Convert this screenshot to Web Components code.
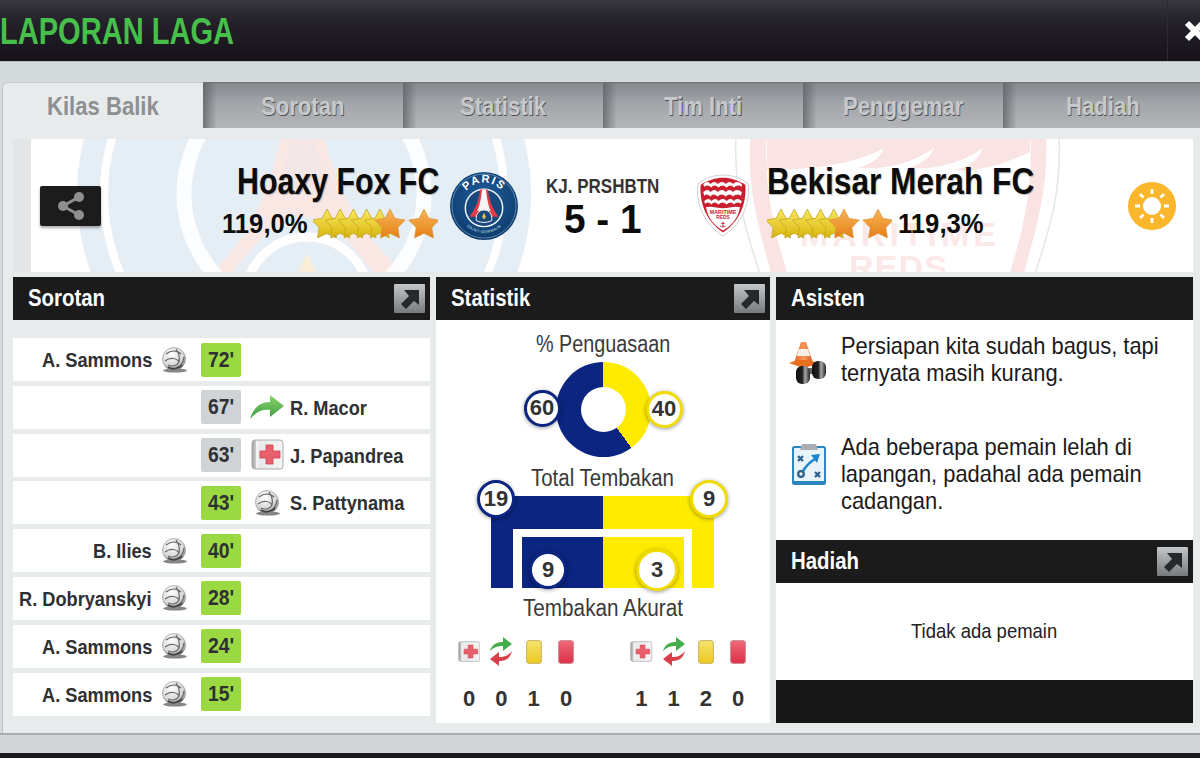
<!DOCTYPE html>
<html lang="id">
<head>
<meta charset="utf-8">
<title>Laporan Laga</title>
<style>
    html, body { margin: 0; width: 1200px; height: 758px; overflow: hidden; background: #d5dadc; }
    body { font-family: "Liberation Sans", Arial, sans-serif; }
</style>
</head>
<body>
<match-report></match-report>

<script>
const SANS = `"Liberation Sans", Arial, sans-serif`;
const SANS_ATTR = `'Liberation Sans', Arial, sans-serif`;

const ICONS = {
    ball: `<svg viewBox="0 0 26 28" width="26" height="28">
        <defs><radialGradient id="b" cx=".4" cy=".3" r=".8"><stop offset="0" stop-color="#fff"/><stop offset=".6" stop-color="#d8d8d8"/><stop offset="1" stop-color="#6d6d6d"/></radialGradient></defs>
        <ellipse cx="14" cy="24.5" rx="12" ry="2" fill="#333" opacity=".6"/>
        <circle cx="13" cy="13" r="11.5" fill="url(#b)" stroke="#8a8a8a" stroke-width=".6"/>
        <path d="M5 8c5-4 11-4 15 0M4 15c5-4 12-3 14 1-2 4-7 5-11 3M15 3c3 4 4 8 3 13M20 19c2-3 3-6 3-8" fill="none" stroke="#666" stroke-width="1.2"/>
        <path d="M7 21c4 3 10 2 14-2" fill="none" stroke="#444" stroke-width="2"/>
    </svg>`,
    arrow: `<svg viewBox="0 0 34 26" width="34" height="26">
        <defs><linearGradient id="a" x1="0" y1="0" x2="0" y2="1"><stop offset="0" stop-color="#8bd667"/><stop offset="1" stop-color="#3d9c46"/></linearGradient></defs>
        <path d="M0 25C3 14 10 8 20 8V1l14 11-14 11v-7C12 15 6 18 0 25Z" fill="url(#a)"/>
    </svg>`,
    medkit: `<svg viewBox="0 0 33 32" width="33" height="32">
        <defs><linearGradient id="m" x1="0" y1="0" x2="1" y2="0"><stop offset="0" stop-color="#9a9da0"/><stop offset=".2" stop-color="#e8e9ea"/><stop offset="1" stop-color="#f4f4f4"/></linearGradient></defs>
        <rect x="1" y="1" width="31" height="29" rx="3" fill="url(#m)" stroke="#a9abad"/>
        <path d="M6 2v27" stroke="#fff" stroke-width="1.4"/>
        <path d="M15 6h7v6h7v7h-7v6h-7v-6H9v-7h6Z" fill="#e8606c" stroke="#d23e4d" stroke-width=".8"/>
    </svg>`,
    sub: `<svg viewBox="0 0 24 30" width="24" height="30">
        <path d="M1 14C3 7 8 5 14 5V0l9 7-9 7V9C9 9 5 10 1 14Z" fill="#45ad4c"/>
        <path d="M23 14C21 22 16 24 10 24v5l-9-7 9-7v5c5 0 9-1 13-6Z" fill="#d8404a"/>
    </svg>`,
    yellow: `<svg viewBox="0 0 16 24" width="16" height="24">
        <defs><linearGradient id="y" x1="0" y1="0" x2="0" y2="1"><stop offset="0" stop-color="#f5e36c"/><stop offset="1" stop-color="#ecc920"/></linearGradient></defs>
        <rect x=".6" y=".6" width="14.8" height="22.8" rx="2.5" fill="url(#y)" stroke="#c9b36a"/>
    </svg>`,
    red: `<svg viewBox="0 0 16 24" width="16" height="24">
        <defs><linearGradient id="r" x1="0" y1="0" x2="0" y2="1"><stop offset="0" stop-color="#ee6a77"/><stop offset="1" stop-color="#dc2f47"/></linearGradient></defs>
        <rect x=".6" y=".6" width="14.8" height="22.8" rx="2.5" fill="url(#r)" stroke="#c98a90"/>
    </svg>`,
    cone: `<svg viewBox="0 0 50 50" width="50" height="50">
        <defs>
            <linearGradient id="w" x1="0" y1="0" x2="1" y2="0"><stop offset="0" stop-color="#111"/><stop offset=".45" stop-color="#222"/><stop offset=".65" stop-color="#aaa"/><stop offset="1" stop-color="#222"/></linearGradient>
            <linearGradient id="c" x1="0" y1="0" x2="1" y2="0"><stop offset="0" stop-color="#e2641d"/><stop offset=".5" stop-color="#f59a5a"/><stop offset="1" stop-color="#d95a18"/></linearGradient>
        </defs>
        <path d="M17 5h5l7 21H10Z" fill="url(#c)"/>
        <path d="M15 12h9l2.2 7H12.8Z" fill="#f5efe8"/>
        <path d="M5 26l8-3h13l9 4-16 4Z" fill="#e86f20"/>
        <rect x="22" y="31" width="12" height="6" fill="#666"/>
        <rect x="12" y="29" width="14" height="18" rx="6" fill="url(#w)"/>
        <rect x="28" y="24" width="14" height="18" rx="6" fill="url(#w)"/>
    </svg>`,
    board: `<svg viewBox="0 0 34 42" width="34" height="42">
        <rect x="1" y="4" width="32" height="37" rx="1.5" fill="#e9f3fa" stroke="#2e86c1" stroke-width="2"/>
        <rect x="1" y="38" width="32" height="3" fill="#2e86c1"/>
        <path d="M10 1h14l2 6H8Z" fill="#a9adb1"/>
        <path d="M6 13l5 5m0-5l-5 5M23 29l5 5m0-5l-5 5" stroke="#2b5f8a" stroke-width="2.2" fill="none"/>
        <circle cx="9" cy="31" r="2.8" fill="none" stroke="#2b5f8a" stroke-width="2.2"/>
        <path d="M11 28c3-5 7-9 12-12" stroke="#1f87c9" stroke-width="2.6" fill="none"/>
        <path d="M19 12l9-1-3 9Z" fill="#1f87c9"/>
    </svg>`,
    share: `<svg viewBox="0 0 30 30" width="30" height="30">
        <path d="M23 6L7 15l16 9" fill="none" stroke="#8f8f8f" stroke-width="3"/>
        <circle cx="23" cy="6" r="5" fill="#8f8f8f"/><circle cx="7" cy="15" r="5" fill="#8f8f8f"/><circle cx="23" cy="24" r="5" fill="#8f8f8f"/>
    </svg>`,
    sun: `<svg viewBox="0 0 48 48" width="48" height="48">
        <circle cx="24" cy="24" r="24" fill="#fab72c"/>
        <circle cx="24" cy="24" r="9" fill="#fff"/>
        <path d="M24 7v5M24 36v5M7 24h5M36 24h5M12 12l3.5 3.5M32.500 32.500l3.500 3.500M36 12l-3.500 3.500M15.500 32.500l-3.500 3.500" stroke="#fff" stroke-width="2.8"/>
    </svg>`,
    expand: `<svg viewBox="0 0 31 29" width="31" height="29">
        <defs><linearGradient id="e" x1="0" y1="0" x2="0" y2="1"><stop offset="0" stop-color="#c3c6c8"/><stop offset="1" stop-color="#787b7e"/></linearGradient></defs>
        <rect width="31" height="29" rx="1" fill="url(#e)"/>
        <path d="M10 6h15v15l-5-4-8 8-5-5 8-8Z" fill="#26282a"/>
    </svg>`,
    close: `<svg viewBox="0 0 24 24" width="24" height="24">
        <path d="M4 4l16 16M20 4L4 20" stroke="#fff" stroke-width="6"/>
    </svg>`
};

function starPath(cx, cy, r) {
    let d = '';
    for (let i = 0; i < 10; i++) {
        const a = Math.PI * i / 5 - Math.PI / 2;
        const rad = i % 2 ? r * 0.52 : r;
        d += (i ? 'L' : 'M') + (cx + rad * Math.cos(a)).toFixed(1) + ' ' + (cy + rad * Math.sin(a)).toFixed(1);
    }
    return d + 'Z';
}

// no condensed face is installed, so the text gets squeezed and the host keeps the squeezed width
class SlimText extends HTMLElement {
    connectedCallback() {
        if (this.shadowRoot) return;
        const k = Number(this.getAttribute('k') || 0.85);
        const root = this.attachShadow({ mode: 'open' });
        root.innerHTML = `
            <style>
                :host { display: inline-block; }
                span { display: inline-block; white-space: nowrap; transform: scaleX(${k}); transform-origin: 0 50%; }
            </style>
            <span><slot></slot></span>
        `;
        this.style.width = (root.querySelector('span').offsetWidth * k) + 'px';
    }
}
customElements.define('slim-text', SlimText);

class GameIcon extends HTMLElement {
    connectedCallback() {
        if (this.shadowRoot) return;
        const root = this.attachShadow({ mode: 'open' });
        root.innerHTML = `<style>:host { display: inline-flex; align-items: center; justify-content: center; } svg { display: block; }</style>${ICONS[this.getAttribute('name')]}`;
    }
}
customElements.define('game-icon', GameIcon);

class StarRating extends HTMLElement {
    connectedCallback() {
        if (this.shadowRoot) return;
        const root = this.attachShadow({ mode: 'open' });
        let stars = '';
        for (let i = 0; i < 5; i++) {
            stars += `<path d="${starPath(14 + i * 13.2, 18, 16)}" fill="url(#gold)" stroke="#c2a51c" stroke-width=".8" stroke-linejoin="round"/>`;
        }
        stars += `<path d="${starPath(77, 18, 16)}" fill="url(#amber)" stroke="#d98a2a" stroke-width=".6" stroke-linejoin="round"/>`;
        stars += `<path d="${starPath(111, 18, 16)}" fill="url(#amber)" stroke="#d98a2a" stroke-width=".6" stroke-linejoin="round"/>`;
        root.innerHTML = `<style>:host { display: inline-block; width: 125px; height: 34px; } svg { display: block; }</style>
            <svg viewBox="0 0 125 34" width="125" height="34">
                <defs>
                    <linearGradient id="gold" x1="0" y1="0" x2="0" y2="1"><stop offset="0" stop-color="#fbe95f"/><stop offset="1" stop-color="#d8b50f"/></linearGradient>
                    <linearGradient id="amber" x1="0" y1="0" x2="0" y2="1"><stop offset="0" stop-color="#f8b65a"/><stop offset="1" stop-color="#e47f15"/></linearGradient>
                </defs>${stars}
            </svg>`;
    }
}
customElements.define('star-rating', StarRating);

class ClubCrest extends HTMLElement {
    connectedCallback() {
        if (this.shadowRoot) return;
        const root = this.attachShadow({ mode: 'open' });
        const paris = `<svg viewBox="0 0 70 70" width="68" height="68">
            <defs>
                <path id="top" d="M11 35a24 24 0 0 1 48 0"/>
                <path id="low" d="M9 37a26 26 0 0 0 52 0"/>
                <radialGradient id="nv" cx=".5" cy=".4" r=".7"><stop offset="0" stop-color="#1f5f9e"/><stop offset="1" stop-color="#0b3563"/></radialGradient>
            </defs>
            <circle cx="35" cy="35" r="35" fill="url(#nv)"/>
            <circle cx="35" cy="35" r="33" fill="none" stroke="#7ea3c6" stroke-width=".7"/>
            <text font-family="${SANS_ATTR}" font-size="11.5" font-weight="700" fill="#fff" letter-spacing="1.5"><textPath href="#top" startOffset="50%" text-anchor="middle">PARIS</textPath></text>
            <text font-family="${SANS_ATTR}" font-size="4" fill="#d8e4ee" letter-spacing=".6"><textPath href="#low" startOffset="50%" text-anchor="middle">SAINT-GERMAIN</textPath></text>
            <circle cx="35" cy="37" r="20" fill="#f4f6f8"/>
            <circle cx="35" cy="37" r="18.5" fill="#17497e"/>
            <path d="M31 18h8c1 11 5 20 11 28H41c-1-5-3-8-6-8s-5 3-6 8H20c6-8 10-17 11-28Z" fill="#e23b48"/>
            <path d="M33 18h4c1 11 3 18 5 22H28c2-4 4-11 5-22Z" fill="#f4f6f8"/>
            <path d="M27 47a8 8 0 0 1 16 0v3a18 18 0 0 1-16 0Z" fill="#17497e" stroke="#f4f6f8"/>
            <path d="M35 42l2 4-2 3-2-3Z" fill="#e8c34b"/>
        </svg>`;
        const reds = `<svg viewBox="0 0 58 70" width="52" height="63">
            <path d="M29 1C38 1 49 4 57 11c2 17-3 42-28 58C4 53-1 28 1 11 9 4 20 1 29 1Z" fill="#fff" stroke="#c9c9c9"/>
            <path d="M29 4C37 4 47 7 54 12c1 16-3 38-25 53C7 50 3 28 4 12 11 7 21 4 29 4Z" fill="#c8202f"/>
            <path d="M7 20c4-3 6-3 8 0 3-3 6-3 8 0 3-3 7-3 9 0 3-3 6-3 8 0 3-3 6-3 10 0l-1 4c-3-2-6-2-9 1-2-3-5-3-8 0-3-3-6-3-9 0-3-3-6-3-8 0-3-3-5-3-7-1Z" fill="#fff"/>
            <path d="M7 11c4-3 6-3 8 0 3-3 6-3 8 0 3-3 7-3 9 0 3-3 6-3 8 0 3-3 6-3 10 0l0 3c-3-2-6-2-9 1-2-3-5-3-8 0-3-3-6-3-9 0-3-3-6-3-8 0-3-3-5-3-8-1Z" fill="#fff"/>
            <path d="M8 30c4-3 6-3 8 0 3-3 6-3 8 0 3-3 7-3 9 0 3-3 6-3 8 0 3-3 5-3 9 0l-1 3c-3-2-5-2-8 1-2-3-5-3-8 0-3-3-6-3-9 0-3-3-6-3-8 0-2-3-4-3-7-1Z" fill="#fff"/>
            <path d="M10 37c6-2 12 1 19 1s13-3 19-1c-2 12-9 20-19 26C19 57 12 49 10 37Z" fill="#fff"/>
            <text x="29" y="44" text-anchor="middle" font-family="${SANS_ATTR}" font-size="6" font-weight="700" fill="#c8202f">MARITIME</text>
            <text x="29" y="50" text-anchor="middle" font-family="${SANS_ATTR}" font-size="5.4" font-weight="700" fill="#c8202f">REDS</text>
            <path d="M29 53v6M27 55h4M26 58c1 1 5 1 6 0" stroke="#c8202f" fill="none"/>
        </svg>`;
        root.innerHTML = `<style>:host { display: flex; align-items: center; } svg { display: block; }</style>${this.getAttribute('club') === 'paris' ? paris : reds}`;
    }
}
customElements.define('club-crest', ClubCrest);

const titleBarTemplate = document.createElement('template');
titleBarTemplate.innerHTML = `
    <style>
        :host {
            display: flex;
            height: 61px;
            background: linear-gradient(#38363e, #24212a 35%, #15121a);
            border-bottom: 1px solid #b6babc;
            overflow: hidden;
        }
        h1 {
            flex: 1;
            margin: 0;
            font: bold 37px/64px ${SANS};
            color: #46c04a;
        }
        .close {
            display: flex;
            align-items: center;
            width: 33px;
            box-sizing: border-box;
            padding-left: 15px;
            border-left: 1px solid #2d2a33;
        }
        .close game-icon { flex: none; }
    </style>
    <h1><slot></slot></h1>
    <div class="close"><game-icon name="close"></game-icon></div>
`;
class TitleBar extends HTMLElement {
    constructor() {
        super();
        this.attachShadow({ mode: 'open' }).appendChild(titleBarTemplate.content.cloneNode(true));
    }
}
customElements.define('title-bar', TitleBar);

const tabTemplate = document.createElement('template');
tabTemplate.innerHTML = `
    <style>
        :host {
            display: flex;
            flex: 0 0 200px;
            align-items: center;
            justify-content: center;
            height: 46px;
            box-sizing: border-box;
            font: bold 26px/1 ${SANS};
            color: #c7c9cc;
            text-shadow: 1px 1px 0 #4f5256;
            background:
                linear-gradient(90deg, #5f6267cc, #5f626700 14px),
                linear-gradient(#85888d, #a2a5a9 45%, #b3b5b9);
            border-top: 1px solid #6f7276;
        }
        :host([active]) {
            color: #8d9092;
            text-shadow: none;
            background: #e8ebec;
            border-top: 1px solid #c6c9cb;
            border-radius: 6px 0 0 0;
        }
    </style>
    <slot></slot>
`;
class TabItem extends HTMLElement {
    constructor() {
        super();
        this.attachShadow({ mode: 'open' }).appendChild(tabTemplate.content.cloneNode(true));
    }
}
customElements.define('tab-item', TabItem);

class MatchHero extends HTMLElement {
    connectedCallback() {
        if (this.shadowRoot) return;
        const root = this.attachShadow({ mode: 'open' });
        root.innerHTML = `
            <style>
                :host {
                    display: grid;
                    grid-template-columns: 61px 339px 78px 170px 79px 361px 48px;
                    align-items: center;
                    position: relative;
                    height: 133px;
                    padding: 0 17px 0 27px;
                    background: #fff;
                    overflow: hidden;
                    font-family: ${SANS};
                    color: #0c0c0c;
                }
                .back { position: absolute; left: 0; top: 0; }
                .strip { position: absolute; left: 0; top: 0; bottom: 0; width: 18px; background: #e3e5e6; }
                .share {
                    position: relative;
                    display: flex; align-items: center; justify-content: center;
                    width: 61px; height: 40px;
                    background: #1c1c1c; border-radius: 2px;
                    box-shadow: 0 2px 3px #0005;
                }
                .team { position: relative; display: flex; flex-direction: column; margin-bottom: 8px; }
                .home { align-items: flex-end; }
                .home .rate { margin-right: 2px; }
                .name { font-size: 37px; font-weight: bold; line-height: 40px; text-shadow: 1px 1px 1px #0004; }
                .rate { display: flex; align-items: center; gap: 6px; font-size: 27px; font-weight: bold; line-height: 34px; margin-top: 5px; }
                club-crest, .score, .sun { position: relative; }
                .home-crest { justify-content: flex-end; margin-left: 3px; }
                .away-crest { padding-left: 9px; }
                .score { text-align: center; margin-top: 5px; }
                .score small { display: block; font-size: 20px; font-weight: bold; color: #333; line-height: 22px; }
                .score b { display: block; font-size: 40px; line-height: 44px; }
                .mark { font: bold 34px/34px ${SANS}; fill: #fbe9e9; }
            </style>
            <svg class="back" width="1180" height="133" viewBox="0 0 1180 133">
                <circle cx="291" cy="55" r="227" fill="#e6eef5"/>
                <circle cx="291" cy="55" r="200" fill="none" stroke="#fff" stroke-width="8"/>
                <path d="M267 0h45c8 45 40 100 78 133H360c-25-32-44-55-70-55s-45 23-70 55H199c38-33 60-88 68-133Z" fill="#f9e7e4"/>
                <path d="M278 0h24c6 25 10 40 18 56H260c8-16 14-31 18-56Z" fill="#f3e6e6"/>
                <circle cx="291" cy="55" r="120" fill="none" stroke="#fff" stroke-width="15" opacity=".85"/>
                <circle cx="294" cy="160" r="62" fill="#e6eef5" stroke="#fff" stroke-width="9"/>
                <path d="M294 115l9 18h-18Z" fill="#f9efd9"/>
                <path d="M724 -20h321c6 70-8 110-28 170H752c-20-60-34-100-28-170Z" fill="#fff" stroke="#e6e6e6" stroke-width="1.500"/>
                <path d="M739 -20h293c6 65-8 105-24 165H761c-16-60-30-100-22-165Z" fill="#f9e3e3"/>
                <path d="M754 -10h263c4 60-8 105-22 150H776c-14-45-26-90-22-150Z" fill="#fff"/>
                <path d="M754 -5h263v18c-30 14-55 20-75 18 16-4 24-12 28-22-20 14-45 22-75 20 14-4 22-10 26-20-20 14-46 22-76 20 14-4 22-10 26-20-20 12-60 22-117 22Z" fill="#f9e3e3"/>
                <text class="mark" x="885" y="107" text-anchor="middle" textLength="196">MARITIME</text>
                <text class="mark" x="885" y="140" text-anchor="middle" textLength="98">REDS</text>
            </svg>
            <div class="strip"></div>
            <div class="share"><game-icon name="share"></game-icon></div>
            <div class="team home">
                <div class="name"><slim-text k=".82">Hoaxy Fox FC</slim-text></div>
                <div class="rate"><slim-text k=".95">119,0%</slim-text><star-rating></star-rating></div>
            </div>
            <club-crest class="home-crest" club="paris"></club-crest>
            <div class="score"><small><slim-text k=".85">KJ. PRSHBTN</slim-text></small><b><slim-text k=".97">5 - 1</slim-text></b></div>
            <club-crest class="away-crest" club="reds"></club-crest>
            <div class="team">
                <div class="name"><slim-text k=".855">Bekisar Merah FC</slim-text></div>
                <div class="rate"><star-rating></star-rating><slim-text k=".95">119,3%</slim-text></div>
            </div>
            <game-icon class="sun" name="sun"></game-icon>
        `;
    }
}
customElements.define('match-hero', MatchHero);

class ReportPanel extends HTMLElement {
    connectedCallback() {
        if (this.shadowRoot) return;
        const root = this.attachShadow({ mode: 'open' });
        const more = this.hasAttribute('plain') ? '' : '<game-icon name="expand"></game-icon>';
        root.innerHTML = `
            <style>
                :host { display: flex; flex-direction: column; min-height: 0; }
                header {
                    display: flex;
                    flex: 0 0 43px;
                    align-items: center;
                    justify-content: space-between;
                    padding: 0 5px 0 15px;
                    background: #1b1b1b;
                    box-sizing: border-box;
                    font: bold 24px/1 ${SANS};
                    color: #fff;
                }
                header slim-text { margin-bottom: 2px; }
                .body { flex: 1; min-height: 0; }
            </style>
            <header><slim-text k=".85">${this.getAttribute('heading')}</slim-text>${more}</header>
            <div class="body"><slot></slot></div>
        `;
    }
}
customElements.define('report-panel', ReportPanel);

class EventRow extends HTMLElement {
    connectedCallback() {
        if (this.shadowRoot) return;
        const root = this.attachShadow({ mode: 'open' });
        const icon = this.getAttribute('icon');
        const player = this.getAttribute('player');
        const side = this.getAttribute('side');
        const who = `<slim-text k=".867">${player}</slim-text>`;
        const ic = `<game-icon name="${icon}"></game-icon>`;
        root.innerHTML = `
            <style>
                :host {
                    display: grid;
                    grid-template-columns: 188px 40px 1fr;
                    align-items: center;
                    height: 43px;
                    background: #fff;
                    font: bold 21px/1 ${SANS};
                    color: #2e3033;
                }
                .left { display: flex; justify-content: flex-end; align-items: center; gap: 9px; padding-right: 14px; white-space: nowrap; }
                .right { display: flex; align-items: center; padding-left: 9px; gap: 6px; white-space: nowrap; }
                .right game-icon { width: 34px; }
                .min {
                    display: flex; align-items: center; justify-content: center;
                    height: 34px; border-radius: 2px;
                    background: ${this.getAttribute('kind') === 'goal' ? '#9bd943' : '#cfd3d6'};
                    font-size: 22px;
                }
            </style>
            <div class="left">${side === 'home' ? who + ic : ''}</div>
            <div class="min"><slim-text k=".88">${this.getAttribute('minute')}'</slim-text></div>
            <div class="right">${side === 'away' ? ic + who : ''}</div>
        `;
    }
}
customElements.define('event-row', EventRow);

class StatBubble extends HTMLElement {
    connectedCallback() {
        if (this.shadowRoot) return;
        const root = this.attachShadow({ mode: 'open' });
        const size = Number(this.getAttribute('size') || 38);
        root.innerHTML = `
            <style>
                :host {
                    display: flex; align-items: center; justify-content: center;
                    position: absolute;
                    width: ${size}px; height: ${size}px;
                    left: ${this.getAttribute('x') - size / 2}px;
                    top: ${this.getAttribute('y') - size / 2}px;
                    box-sizing: border-box;
                    background: #fff;
                    border-radius: 50%;
                    border: 3px solid ${this.getAttribute('tone') === 'blue' ? '#0b2580' : '#f1dc00'};
                    box-shadow: 0 1px 4px #0006;
                    font: bold 22px/1 ${SANS};
                    color: #333;
                }
            </style>
            <slot></slot>
        `;
    }
}
customElements.define('stat-bubble', StatBubble);

const statsTemplate = document.createElement('template');
statsTemplate.innerHTML = `
    <style>
        :host {
            display: flex;
            flex-direction: column;
            height: 403px;
            box-sizing: border-box;
            padding-top: 11px;
            background: #fff;
            position: relative;
            font-family: ${SANS};
            color: #3a3a3a;
        }
        .label { height: 26px; font-size: 23px; line-height: 26px; text-align: center; }
        .donut {
            align-self: center;
            display: flex; align-items: center; justify-content: center;
            width: 95px; height: 95px; margin-top: 5px;
            border-radius: 50%;
            background: conic-gradient(#ffeb00 0 40%, #0b2580 0);
        }
        .donut i { width: 45px; height: 45px; border-radius: 50%; background: #fff; }
        .goal {
            position: relative;
            align-self: flex-start;
            width: 223px; height: 92px;
            margin: 5px 0 0 55px;
            background: linear-gradient(90deg, #0b2580 112px, #ffeb00 112px);
        }
        .goal .gap {
            position: absolute; left: 22px; top: 33px; right: 22px; bottom: 0;
            background: #fff;
        }
        .goal .in {
            position: absolute; left: 9px; top: 8px; right: 8px; bottom: 0;
            background: linear-gradient(90deg, #0b2580 81px, #ffeb00 81px);
        }
        .over { position: absolute; left: 0; top: 0; }
        .counts {
            display: grid;
            grid-template-columns: repeat(4, 32.3px) 43px repeat(4, 32.3px);
            grid-template-rows: 28px 26px;
            row-gap: 20px;
            justify-items: center;
            align-items: center;
            padding-left: 17px;
            margin-top: 17px;
            font: bold 22px/1 ${SANS};
            color: #333;
        }
        .counts .sp { grid-row: 1 / 3; grid-column: 5; }
    </style>
    <div class="label"><slim-text k=".86">% Penguasaan</slim-text></div>
    <div class="donut"><i></i></div>
    <div class="label" style="margin-top:8px"><slim-text k=".89">Total Tembakan</slim-text></div>
    <div class="goal"><div class="gap"><div class="in"></div></div></div>
    <div class="label" style="margin-top:7px"><slim-text k=".9">Tembakan Akurat</slim-text></div>
    <div class="counts">
        <game-icon name="medkit" style="zoom:.68"></game-icon><game-icon name="sub"></game-icon><game-icon name="yellow"></game-icon><game-icon name="red"></game-icon>
        <div class="sp"></div>
        <game-icon name="medkit" style="zoom:.68"></game-icon><game-icon name="sub"></game-icon><game-icon name="yellow"></game-icon><game-icon name="red"></game-icon>
        <span>0</span><span>0</span><span>1</span><span>0</span>
        <span>1</span><span>1</span><span>2</span><span>0</span>
    </div>
    <div class="over">
        <stat-bubble tone="blue" x="106" y="88" size="37">60</stat-bubble>
        <stat-bubble tone="yellow" x="228" y="89" size="37">40</stat-bubble>
        <stat-bubble tone="blue" x="60" y="179" size="38">19</stat-bubble>
        <stat-bubble tone="yellow" x="273" y="179" size="38">9</stat-bubble>
        <stat-bubble tone="blue" x="112" y="250" size="38">9</stat-bubble>
        <stat-bubble tone="yellow" x="221" y="250" size="42">3</stat-bubble>
    </div>
`;
class StatsBoard extends HTMLElement {
    constructor() {
        super();
        this.attachShadow({ mode: 'open' }).appendChild(statsTemplate.content.cloneNode(true));
    }
}
customElements.define('stats-board', StatsBoard);

class AdviceItem extends HTMLElement {
    connectedCallback() {
        if (this.shadowRoot) return;
        const root = this.attachShadow({ mode: 'open' });
        root.innerHTML = `
            <style>
                :host {
                    display: grid;
                    grid-template-columns: 65px 1fr;
                    align-items: center;
                    font: 24px/27px ${SANS};
                    color: #1a1a1a;
                }
                game-icon { justify-self: center; }
                .cone { margin-top: 7px; }
                .board { margin-bottom: 20px; }
            </style>
            <game-icon class="${this.getAttribute('icon')}" name="${this.getAttribute('icon')}"></game-icon>
            <div><slot></slot></div>
        `;
    }
}
customElements.define('advice-item', AdviceItem);

class MatchReport extends HTMLElement {
    connectedCallback() {
        if (this.shadowRoot) return;
        const root = this.attachShadow({ mode: 'open' });
        const events = [
            ['A. Sammons', 'ball', 72, 'goal', 'home'],
            ['R. Macor', 'arrow', 67, 'note', 'away'],
            ['J. Papandrea', 'medkit', 63, 'note', 'away'],
            ['S. Pattynama', 'ball', 43, 'goal', 'away'],
            ['B. Ilies', 'ball', 40, 'goal', 'home'],
            ['R. Dobryanskyi', 'ball', 28, 'goal', 'home'],
            ['A. Sammons', 'ball', 24, 'goal', 'home'],
            ['A. Sammons', 'ball', 15, 'goal', 'home']
        ].map(e => `<event-row player="${e[0]}" icon="${e[1]}" minute="${e[2]}" kind="${e[3]}" side="${e[4]}"></event-row>`).join('');
        root.innerHTML = `
            <style>
                :host { display: flex; flex-direction: column; width: 1200px; height: 758px; background: #d5dadc; font-family: ${SANS}; }
                .sheet {
                    display: flex; flex-direction: column;
                    height: 651px;
                    margin: 20px 0 0 3px;
                    background: #e8ebec;
                    border-radius: 6px 0 0 0;
                    box-shadow: -1px 0 0 #bfc3c5;
                }
                .tabs { display: flex; flex: 0 0 46px; overflow: hidden; }
                .content { padding: 11px 7px 0 10px; }
                .cols {
                    display: grid;
                    grid-template-columns: 417px 334px 417px;
                    column-gap: 6px;
                    height: 446px;
                    margin-top: 5px;
                }
                .events { display: flex; flex-direction: column; gap: 4.8px; padding-top: 18px; }
                .side { display: flex; flex-direction: column; }
                .tips { display: flex; flex-direction: column; height: 220px; box-sizing: border-box; padding-top: 10px; background: #fff; }
                .tips advice-item + advice-item { margin-top: 46px; }
                .none {
                    display: flex; align-items: center; justify-content: center;
                    height: 97px; box-sizing: border-box; padding-bottom: 2px; background: #fff;
                    font-size: 21px; color: #222;
                }
                .black { flex: 1; background: #171717; }
                .foot { flex: 1; border-top: 2px solid #a9acad; background: #d3d6d6; }
                .base { flex: 0 0 5px; background: #1a181d; }
            </style>
            <title-bar><slim-text k=".785">LAPORAN LAGA</slim-text></title-bar>
            <div class="sheet">
                <div class="tabs">
                    <tab-item active><slim-text>Kilas Balik</slim-text></tab-item>
                    <tab-item><slim-text>Sorotan</slim-text></tab-item>
                    <tab-item><slim-text>Statistik</slim-text></tab-item>
                    <tab-item><slim-text>Tim Inti</slim-text></tab-item>
                    <tab-item><slim-text>Penggemar</slim-text></tab-item>
                    <tab-item><slim-text>Hadiah</slim-text></tab-item>
                </div>
                <div class="content">
                    <match-hero></match-hero>
                    <div class="cols">
                        <report-panel heading="Sorotan"><div class="events">${events}</div></report-panel>
                        <report-panel heading="Statistik"><stats-board></stats-board></report-panel>
                        <div class="side">
                            <report-panel heading="Asisten" plain>
                                <div class="tips">
                                    <advice-item icon="cone"><slim-text k=".912">Persiapan kita sudah bagus, tapi<br>ternyata masih kurang.</slim-text></advice-item>
                                    <advice-item icon="board"><slim-text k=".912">Ada beberapa pemain lelah di<br>lapangan, padahal ada pemain<br>cadangan.</slim-text></advice-item>
                                </div>
                            </report-panel>
                            <report-panel heading="Hadiah"><div class="none"><slim-text k=".88">Tidak ada pemain</slim-text></div></report-panel>
                            <div class="black"></div>
                        </div>
                    </div>
                </div>
            </div>
            <div class="foot"></div>
            <div class="base"></div>
        `;
    }
}
customElements.define('match-report', MatchReport);
</script>
</body>
</html>
